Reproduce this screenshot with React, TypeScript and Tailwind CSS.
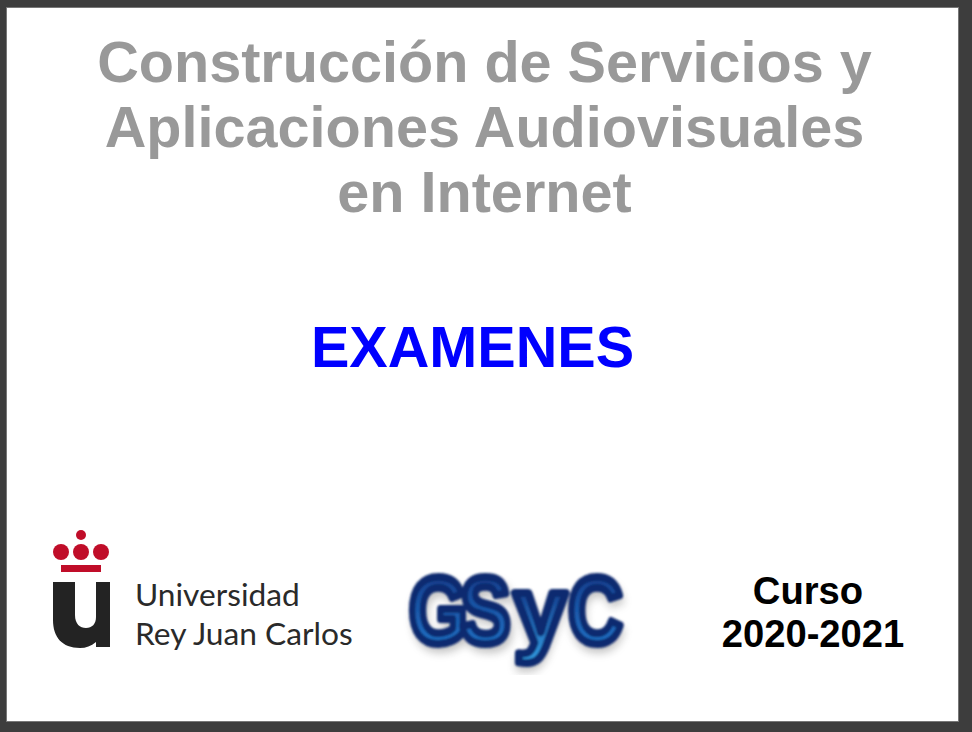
export default function App() {
  return (
    <div className="w-[972px] h-[732px] bg-[#3d3d3d] pt-2 pl-[7px] overflow-hidden">
      <div className="w-[951px] h-[713px] bg-white flex flex-col font-['Liberation_Sans',Arial,sans-serif] font-bold outline outline-1 outline-[#777777]">
        <h1 className="mt-[22px] ml-[4px] text-center text-[57.6px] leading-[65px] text-[#999999]">
          Construcción de Servicios y
          <br />
          Aplicaciones Audiovisuales
          <br />
          en Internet
        </h1>
        <p className="mt-[87px] mr-[20px] text-center text-[57.6px] leading-[70px] text-[#0000ff]">EXAMENES</p>
        <div className="mt-[148px] flex items-start">
          <div className="ml-[46px] w-[300px] flex items-start">
            <svg width="58" height="120" viewBox="0 0 58 120" className="shrink-0">
              <circle cx="28" cy="5" r="5" fill="#c00d29" />
              <circle cx="8" cy="22" r="8" fill="#c00d29" />
              <circle cx="28" cy="22" r="8" fill="#c00d29" />
              <circle cx="48" cy="22" r="8" fill="#c00d29" />
              <rect x="8" y="35" width="40" height="7" fill="#c00d29" />
              <path d="M0 52H22V85C22 94 27 98 33 98C39 98 43 94 43 87V52H57V117H43V112C38 116 33 118 27 118C9 118 0 107 0 90Z" fill="#232323" />
            </svg>
            <div className="ml-[24px] mt-[45px] font-['Lato',sans-serif] font-normal text-[#2a2a2a] text-[31.7px] leading-[39px] whitespace-nowrap">
              <div>Universidad</div>
              <div>Rey Juan Carlos</div>
            </div>
          </div>
          <svg width="255" height="120" viewBox="0 0 255 120" className="ml-[32px] mt-[25px] shrink-0">
            <defs>
              <linearGradient id="gs" x1="0" y1="20" x2="0" y2="92" gradientUnits="userSpaceOnUse">
                <stop offset="0" stopColor="#143f8e" />
                <stop offset="1" stopColor="#1f74c8" />
              </linearGradient>
              <linearGradient id="gy" x1="0" y1="-50" x2="0" y2="22" gradientUnits="userSpaceOnUse">
                <stop offset="0" stopColor="#14408f" />
                <stop offset="1" stopColor="#35a5ea" />
              </linearGradient>
              <filter id="bl" x="-10%" y="-10%" width="120%" height="130%">
                <feGaussianBlur stdDeviation="4" />
              </filter>
              <filter id="sf" x="-5%" y="-5%" width="110%" height="110%">
                <feGaussianBlur stdDeviation="1" />
              </filter>
            </defs>
            <g fontFamily="'Liberation Sans',Arial,sans-serif" fontWeight="700" fontSize="94" opacity="0.35" filter="url(#bl)" fill="#555555" stroke="#555555" strokeWidth="6">
              <text transform="translate(3 6) scale(0.8 1)" x="29 94 227" y="88">GSC</text>
              <text transform="translate(129 94)">y</text>
            </g>
            <g fontFamily="'Liberation Sans',Arial,sans-serif" fontWeight="700" fontSize="94" strokeWidth="8" strokeLinejoin="round" stroke="#10296f" filter="url(#sf)">
              <text transform="scale(0.8 1)" y="88" fill="url(#gs)" x="30 94">GS</text>
              <text transform="translate(129 88)" fill="url(#gy)">y</text>
              <text transform="scale(0.8 1)" y="88" fill="url(#gs)" x="229">C</text>
            </g>
          </svg>
          <div className="ml-[48px] mt-[39px] w-[250px] text-center text-black text-[38.2px] leading-[43px] whitespace-nowrap">
            <div className="mr-[10px]">Curso</div>
            <div>2020-2021</div>
          </div>
        </div>
      </div>
    </div>
  );
}
